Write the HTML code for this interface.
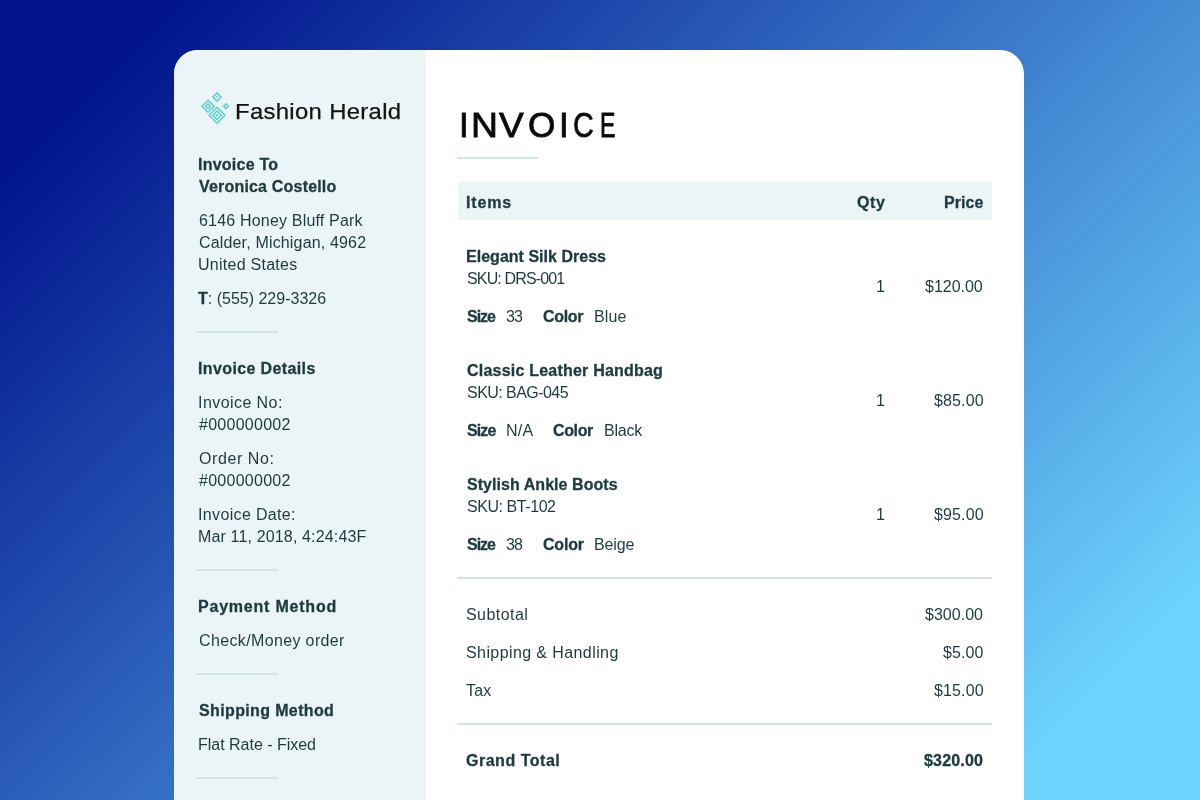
<!DOCTYPE html>
<html><head><meta charset="utf-8">
<style>
html,body{margin:0;padding:0;width:1200px;height:800px;overflow:hidden;}
body{background:linear-gradient(135deg,#00128c 8%,#6ed4ff 90%);font-family:"Liberation Sans",sans-serif;position:relative;}
.card{position:absolute;left:174px;top:50px;width:850px;height:800px;background:#fff;border-radius:24px 24px 0 0;overflow:hidden;}
.side{position:absolute;left:0;top:0;width:252px;height:800px;background:#ebf4f6;}
.t{position:absolute;white-space:nowrap;font-size:16px;line-height:22px;color:#1d3a40;will-change:transform;}
.hr{position:absolute;height:2px;background:#d0e4e9;}
.title{position:absolute;left:0;top:103px;white-space:nowrap;font-size:34.5px;line-height:44px;color:#0a0a0a;-webkit-text-stroke:0.8px #0a0a0a;}
.title span{position:absolute;top:0;transform-origin:0 0;will-change:transform;}
.logo-text{position:absolute;white-space:nowrap;font-size:22px;line-height:30px;color:#141414;will-change:transform;-webkit-text-stroke:0.25px #141414;}
</style></head><body>
<div class="card"><div class="side"></div></div>
<div class="hr" style="left:197px;top:331px;width:81px"></div>
<div class="hr" style="left:197px;top:569px;width:81px"></div>
<div class="hr" style="left:197px;top:673px;width:81px"></div>
<div class="hr" style="left:197px;top:777px;width:81px"></div>
<div class="hr" style="left:457px;top:157px;width:81px"></div>
<div style="position:absolute;left:458px;top:182px;width:534px;height:38px;background:#ebf4f6"></div>
<div class="hr" style="left:457px;top:577px;width:535px"></div>
<div class="hr" style="left:457px;top:723px;width:535px"></div>
<div class="title"><span style="left:458.74px;transform:scaleX(0.98)">I</span><span style="left:471.24px;transform:scaleX(1.081)">N</span><span style="left:498.58px;transform:scaleX(1.076)">V</span><span style="left:527.68px;transform:scaleX(1.02)">O</span><span style="left:559.20px;transform:scaleX(1.0)">I</span><span style="left:573.17px;transform:scaleX(0.83)">C</span><span style="left:600.26px;transform:scaleX(0.67)">E</span></div>
<div class="logo-text" style="left:235px;top:97px;letter-spacing:0.3px;transform:scaleX(1.085);transform-origin:0 0">Fashion Herald</div>
<svg style="position:absolute;left:198px;top:88px" width="34" height="40" viewBox="198 88 34 40">
 <g fill="none" stroke="#5ccfd0" stroke-width="1.5">
  <polygon points="217,92.9 221.1,97 217,101.1 212.9,97"/>
  <polygon points="208,100.25 214,106.25 208,112.25 202,106.25"/>
  <polygon points="208,103.75 210.5,106.25 208,108.75 205.5,106.25"/>
  <polygon points="217,107.25 225,115.25 217,123.25 209,115.25"/>
  <polygon points="217,111 221.25,115.25 217,119.5 212.75,115.25"/>
  <polygon points="226,103.85 228.4,106.25 226,108.65 223.6,106.25"/>
 </g>
 <g fill="#5ccfd0">
  <polygon points="217,95.7 218.3,97 217,98.3 215.7,97"/>
  <polygon points="217,113.75 218.5,115.25 217,116.75 215.5,115.25"/>
 </g>
</svg>
<div class="t" style="left:197.7px;top:288px"><b style="-webkit-text-stroke:0.3px #1d3a40">T</b>: (555) 229-3326</div>
<div class="t" style="left:197.75px;top:154px;font-weight:bold;-webkit-text-stroke:0.3px #1d3a40;letter-spacing:0.232px;">Invoice To</div>
<div class="t" style="left:198.75px;top:176px;font-weight:bold;-webkit-text-stroke:0.3px #1d3a40;letter-spacing:0.188px;">Veronica Costello</div>
<div class="t" style="left:198.75px;top:210px;letter-spacing:0.187px;">6146 Honey Bluff Park</div>
<div class="t" style="left:198.75px;top:232px;letter-spacing:0.162px;">Calder, Michigan, 4962</div>
<div class="t" style="left:197.75px;top:254px;letter-spacing:0.266px;">United States</div>
<div class="t" style="left:197.50px;top:358px;font-weight:bold;-webkit-text-stroke:0.3px #1d3a40;letter-spacing:0.375px;">Invoice Details</div>
<div class="t" style="left:197.50px;top:392px;letter-spacing:0.431px;">Invoice No:</div>
<div class="t" style="left:198.50px;top:414px;letter-spacing:0.268px;">#000000002</div>
<div class="t" style="left:198.50px;top:448px;letter-spacing:0.588px;">Order No:</div>
<div class="t" style="left:198.50px;top:470px;letter-spacing:0.268px;">#000000002</div>
<div class="t" style="left:197.50px;top:504px;letter-spacing:0.347px;">Invoice Date:</div>
<div class="t" style="left:197.50px;top:526px;letter-spacing:0.149px;">Mar 11, 2018, 4:24:43F</div>
<div class="t" style="left:197.50px;top:596px;font-weight:bold;-webkit-text-stroke:0.3px #1d3a40;letter-spacing:0.789px;">Payment Method</div>
<div class="t" style="left:198.50px;top:630px;letter-spacing:0.363px;">Check/Money order</div>
<div class="t" style="left:198.50px;top:700px;font-weight:bold;-webkit-text-stroke:0.3px #1d3a40;letter-spacing:0.366px;">Shipping Method</div>
<div class="t" style="left:197.50px;top:734px;letter-spacing:-0.016px;">Flat Rate - Fixed</div>
<div class="t" style="left:465.90px;top:192px;font-weight:bold;-webkit-text-stroke:0.3px #1d3a40;letter-spacing:0.825px;">Items</div>
<div class="t" style="left:856.70px;top:192px;font-weight:bold;-webkit-text-stroke:0.3px #1d3a40;letter-spacing:0.613px;">Qty</div>
<div class="t" style="left:943.70px;top:192px;font-weight:bold;-webkit-text-stroke:0.3px #1d3a40;letter-spacing:0.089px;">Price</div>
<div class="t" style="left:465.70px;top:246px;font-weight:bold;-webkit-text-stroke:0.3px #1d3a40;letter-spacing:0.022px;">Elegant Silk Dress</div>
<div class="t" style="left:466.70px;top:268px;letter-spacing:-0.854px;">SKU: DRS-001</div>
<div class="t" style="left:466.70px;top:306px;font-weight:bold;-webkit-text-stroke:0.3px #1d3a40;letter-spacing:-1.006px;">Size</div>
<div class="t" style="left:506.30px;top:306px;letter-spacing:-0.898px;">33</div>
<div class="t" style="left:543.00px;top:306px;font-weight:bold;-webkit-text-stroke:0.3px #1d3a40;letter-spacing:-0.312px;">Color</div>
<div class="t" style="left:593.70px;top:306px;letter-spacing:0.158px;">Blue</div>
<div class="t" style="left:875.90px;top:276px;">1</div>
<div class="t" style="left:925.30px;top:276px;letter-spacing:-0.023px;">$120.00</div>
<div class="t" style="left:466.60px;top:360px;font-weight:bold;-webkit-text-stroke:0.3px #1d3a40;letter-spacing:0.214px;">Classic Leather Handbag</div>
<div class="t" style="left:466.60px;top:382px;letter-spacing:-0.546px;">SKU: BAG-045</div>
<div class="t" style="left:466.60px;top:420px;font-weight:bold;-webkit-text-stroke:0.3px #1d3a40;letter-spacing:-0.906px;">Size</div>
<div class="t" style="left:505.70px;top:420px;letter-spacing:0.300px;">N/A</div>
<div class="t" style="left:552.90px;top:420px;font-weight:bold;-webkit-text-stroke:0.3px #1d3a40;letter-spacing:-0.362px;">Color</div>
<div class="t" style="left:603.70px;top:420px;letter-spacing:-0.206px;">Black</div>
<div class="t" style="left:875.90px;top:390px;">1</div>
<div class="t" style="left:933.70px;top:390px;letter-spacing:0.132px;">$85.00</div>
<div class="t" style="left:466.70px;top:474px;font-weight:bold;-webkit-text-stroke:0.3px #1d3a40;letter-spacing:0.053px;">Stylish Ankle Boots</div>
<div class="t" style="left:466.70px;top:496px;letter-spacing:-0.438px;">SKU: BT-102</div>
<div class="t" style="left:466.70px;top:534px;font-weight:bold;-webkit-text-stroke:0.3px #1d3a40;letter-spacing:-1.006px;">Size</div>
<div class="t" style="left:506.30px;top:534px;letter-spacing:-0.898px;">38</div>
<div class="t" style="left:542.50px;top:534px;font-weight:bold;-webkit-text-stroke:0.3px #1d3a40;letter-spacing:-0.187px;">Color</div>
<div class="t" style="left:593.70px;top:534px;letter-spacing:-0.131px;">Beige</div>
<div class="t" style="left:875.90px;top:504px;">1</div>
<div class="t" style="left:933.70px;top:504px;letter-spacing:0.132px;">$95.00</div>
<div class="t" style="left:466.40px;top:604px;letter-spacing:0.449px;">Subtotal</div>
<div class="t" style="left:925.30px;top:604px;letter-spacing:0.027px;">$300.00</div>
<div class="t" style="left:466.40px;top:642px;letter-spacing:0.406px;">Shipping &amp; Handling</div>
<div class="t" style="left:943.00px;top:642px;letter-spacing:0.065px;">$5.00</div>
<div class="t" style="left:466.40px;top:680px;letter-spacing:0.201px;">Tax</div>
<div class="t" style="left:933.70px;top:680px;letter-spacing:0.132px;">$15.00</div>
<div class="t" style="left:466.40px;top:750px;font-weight:bold;-webkit-text-stroke:0.3px #1d3a40;letter-spacing:0.515px;">Grand Total</div>
<div class="t" style="left:924.40px;top:750px;font-weight:bold;-webkit-text-stroke:0.3px #1d3a40;letter-spacing:0.177px;">$320.00</div>
</body></html>
